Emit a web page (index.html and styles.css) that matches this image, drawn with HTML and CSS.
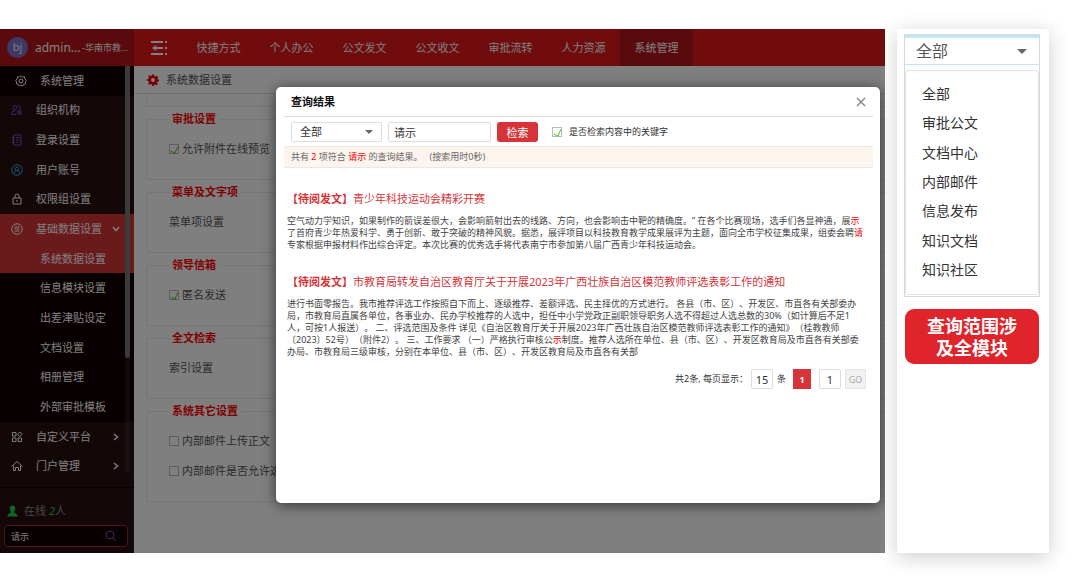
FILE: index.html
```html
<!DOCTYPE html>
<html lang="zh-CN">
<head>
    <meta charset="UTF-8">
    <meta name="viewport" content="width=device-width, initial-scale=1.0">
    <title>系统管理 - 查询结果</title>
    <link rel="stylesheet" href="styles.css">
</head>
<body>
    <div class="app">
        <!-- 左侧菜单 -->
        <aside class="sidebar">
            <div class="user">
                <span class="avatar">bj</span>
                <span class="user-name">admin...</span>
                <span class="user-org">-华南市教...</span>
            </div>
            <nav class="menu">
                <a class="menu-item menu-top" href="#">
                    <svg class="icon" viewBox="0 0 24 24"><path d="M12 1.500l3 2.500 4-.5.5 4 3 3-1.500 3 .5 4-4 1-2 3.500-3.500-1.500L8.500 22l-2-3.500-4-1 .5-4-1.500-3 3-3 .5-4 4 .5z"/><circle cx="12" cy="12" r="4"/></svg>
                    <span>系统管理</span>
                </a>
                <a class="menu-item" href="#">
                    <svg class="icon purple" viewBox="0 0 24 24"><circle cx="8" cy="7" r="4"/><path d="M14 3a4 4 0 0 1 1 8M2 21v-4q0-4 6-4M2 21h8"/><circle cx="17" cy="17" r="4"/><path d="M17 15v4M15 17h4"/></svg>
                    <span>组织机构</span>
                </a>
                <a class="menu-item" href="#">
                    <svg class="icon purple" viewBox="0 0 24 24"><path d="M5 2h15v20H5zM2 7h5M2 12h5M2 17h5M10 7h7M10 12h7M10 17h3M16 17h1"/></svg>
                    <span>登录设置</span>
                </a>
                <a class="menu-item" href="#">
                    <svg class="icon blue" viewBox="0 0 24 24"><circle cx="12" cy="12" r="10.500"/><circle cx="12" cy="9.500" r="3.500"/><path d="M6 19q0-6 6-6t6 6"/></svg>
                    <span>用户账号</span>
                </a>
                <a class="menu-item" href="#">
                    <svg class="icon" viewBox="0 0 24 24"><path d="M4 10h16v12H4zM8 10V6q0-4 4-4t4 4v4M12 14v4"/></svg>
                    <span>权限组设置</span>
                </a>
                <a class="menu-item active" href="#">
                    <svg class="icon" viewBox="0 0 24 24"><circle cx="12" cy="12" r="10.500"/><path d="M7 8h10M7 12h10M7 16h10"/></svg>
                    <span>基础数据设置</span>
                    <svg class="arrow" viewBox="0 0 10 10"><path d="M2 3l3 3.500L8 3"/></svg>
                </a>
                <a class="menu-item sub active" href="#">系统数据设置</a>
                <a class="menu-item sub" href="#">信息模块设置</a>
                <a class="menu-item sub" href="#">出差津贴设定</a>
                <a class="menu-item sub" href="#">文档设置</a>
                <a class="menu-item sub" href="#">相册管理</a>
                <a class="menu-item sub" href="#">外部审批模板</a>
                <a class="menu-item" href="#">
                    <svg class="icon" viewBox="0 0 24 24"><path d="M3 3h7v7H3zM3 14h7v7H3zM14 14h7v7h-7zM17.500 2l4.500 4.500-4.500 4.500L13 6.500z"/></svg>
                    <span>自定义平台</span>
                    <svg class="arrow" viewBox="0 0 10 10"><path d="M3 2l3.500 3L3 8"/></svg>
                </a>
                <a class="menu-item" href="#">
                    <svg class="icon" viewBox="0 0 24 24"><path d="M1 13L12 3l11 10M5 11v10h4v-6h6v6h4V11"/></svg>
                    <span>门户管理</span>
                    <svg class="arrow" viewBox="0 0 10 10"><path d="M3 2l3.500 3L3 8"/></svg>
                </a>
                <div class="scrollbar"><div class="scroll-thumb"></div></div>
            </nav>
            <div class="side-footer">
                <div class="online">
                    <svg class="person" viewBox="0 0 24 26"><path d="M12 1c4 0 6 3 6 7 0 3-1.500 5-3 7 0 3 8 3 8 10H1c0-7 8-7 8-10-1.500-2-3-4-3-7 0-4 2-7 6-7z"/></svg>
                    <span>在线 <b class="online-num">2</b>人</span>
                </div>
                <div class="side-search">
                    <input class="side-input" type="text" value="请示" aria-label="搜索">
                    <svg class="icon purple" viewBox="0 0 24 24"><circle cx="10" cy="10" r="8"/><path d="M16 16l6 6"/></svg>
                </div>
            </div>
        </aside>

        <!-- 主体 -->
        <div class="main">
            <header class="topbar">
                <svg class="toggle" viewBox="0 0 17 14"><path d="M0 1h12M14 1h2M4 7h8M14 7h2M0 13h12M14 13h2"/><path class="toggle-tip" d="M5 4v6L1 7z"/></svg>
                <nav class="tabs">
                    <a class="tab" href="#">快捷方式</a>
                    <a class="tab" href="#">个人办公</a>
                    <a class="tab" href="#">公文发文</a>
                    <a class="tab" href="#">公文收文</a>
                    <a class="tab" href="#">审批流转</a>
                    <a class="tab" href="#">人力资源</a>
                    <a class="tab tab-active" href="#">系统管理</a>
                </nav>
            </header>
            <div class="crumb">
                <svg class="gear" viewBox="0 0 24 24"><path fill-rule="evenodd" d="M10 1h4l.7 3 2.300 1 2.700-1.700 3 3L21 9l.8 2 2.200.5v3l-3 .7-1 2.300 1.700 2.500-2.500 2.500-2.700-1.500-2.200 1L13.500 24h-3L9.700 21l-2.200-1-2.700 1.500L2.300 19 4 16.500l-1-2.300-3-.7v-3L3 10l1-2.300L2.300 5l2.500-2.500L7.500 4l2-1zM12 8a4 4 0 1 0 0 8 4 4 0 0 0 0-8z"/></svg>
                <span>系统数据设置</span>
            </div>
            <div class="settings">
                <div class="group-end"></div>
                <fieldset class="group">
                    <legend>审批设置</legend>
                    <label class="option"><input class="tick" type="checkbox" checked>允许附件在线预览</label>
                </fieldset>
                <fieldset class="group">
                    <legend>菜单及文字项</legend>
                    <div class="option">菜单项设置</div>
                </fieldset>
                <fieldset class="group">
                    <legend>领导信箱</legend>
                    <label class="option"><input class="tick" type="checkbox" checked>匿名发送</label>
                </fieldset>
                <fieldset class="group">
                    <legend>全文检索</legend>
                    <div class="option">索引设置</div>
                </fieldset>
                <fieldset class="group">
                    <legend>系统其它设置</legend>
                    <label class="option"><input class="tick" type="checkbox">内部邮件上传正文</label>
                    <label class="option"><input class="tick" type="checkbox">内部邮件是否允许选择</label>
                </fieldset>
            </div>
        </div>

        <!-- 查询结果弹窗 -->
        <div class="overlay">
            <div class="modal">
                <div class="modal-header">
                    <h2>查询结果</h2>
                    <button class="close" type="button" aria-label="关闭">
                        <svg viewBox="0 0 10 10"><path d="M1 1l8 8M9 1L1 9"/></svg>
                    </button>
                </div>
                <form class="search-row">
                    <div class="select-box">
                        <select class="field" aria-label="查询范围">
                            <option>全部</option>
                            <option>审批公文</option>
                            <option>文档中心</option>
                            <option>内部邮件</option>
                        </select>
                    </div>
                    <input class="field keyword" type="text" value="请示" aria-label="关键字">
                    <button class="search-btn" type="button">检索</button>
                    <label class="check-content"><input class="tick" type="checkbox" checked>是否检索内容中的关键字</label>
                </form>
                <div class="summary">共有 <em>2</em> 项符合 <em>请示</em> 的查询结果。 &nbsp;&nbsp;(搜索用时0秒)</div>
                <div class="results">
                    <article class="result">
                        <h3><b>【待阅发文】</b>青少年科技运动会精彩开赛</h3>
                        <p>
                            空气动力学知识，如果制作的箭误差很大，会影响箭射出去的线路、方向，也会影响击中靶的精确度。” 在各个比赛现场，选手们各显神通，展<em>示</em><br>
                            了首府青少年热爱科学、勇于创新、敢于突破的精神风貌。据悉，展评项目以科技教育教学成果展评为主题，面向全市学校征集成果，组委会聘<em>请</em><br>
                            专家根据申报材料作出综合评定。本次比赛的优秀选手将代表南宁市参加第八届广西青少年科技运动会。
                        </p>
                    </article>
                    <article class="result">
                        <h3><b>【待阅发文】</b>市教育局转发自治区教育厅关于开展2023年广西壮族自治区模范教师评选表彰工作的通知</h3>
                        <p>
                            进行书面零报告。我市推荐评选工作按照自下而上、逐级推荐、差额评选、民主择优的方式进行。 各县（市、区）、开发区、市直各有关部委办<br>
                            局，市教育局直属各单位，各事业办、民办学校推荐的人选中，担任中小学党政正副职领导职务人选不得超过人选总数的30%（如计算后不足1<br>
                            人，可按1人报送）。 二、评选范围及条件 详见《自治区教育厅关于开展2023年广西壮族自治区模范教师评选表彰工作的通知》（桂教教师<br>
                            〔2023〕52号）（附件2）。 三、工作要求 （一）严格执行审核公<em>示</em>制度。推荐人选所在单位、县（市、区）、开发区教育局及市直各有关部委<br>
                            办局、市教育局三级审核，分别在本单位、县（市、区）、开发区教育局及市直各有关部
                        </p>
                    </article>
                    <div class="pager">
                        <label class="pager-label" for="pageSize">共2条, 每页显示：</label>
                        <input class="page-input" id="pageSize" type="text" value="15">
                        <span class="pager-unit">条</span>
                        <button class="page-current" type="button">1</button>
                        <input class="page-input" type="text" value="1" aria-label="页码">
                        <button class="page-go" type="button">GO</button>
                    </div>
                </div>
            </div>
        </div>
    </div>

    <!-- 查询范围说明 -->
    <aside class="scope">
        <div class="scope-box">
            <div class="select-box scope-select">
                <select aria-label="范围">
                    <option>全部</option>
                </select>
            </div>
            <ul class="scope-list">
                <li>全部</li>
                <li>审批公文</li>
                <li>文档中心</li>
                <li>内部邮件</li>
                <li>信息发布</li>
                <li>知识文档</li>
                <li>知识社区</li>
            </ul>
        </div>
        <div class="scope-note">查询范围涉<br>及全模块</div>
    </aside>
</body>
</html>
```

FILE: styles.css
```css
* {
    box-sizing: border-box;
}
body {
    margin: 0;
    padding: 29px 31px 35px 0;
    min-height: 100vh;
    display: flex;
    gap: 12px;
    background-color: #fff;
    font-family: "Noto Sans", "Noto Sans CJK SC", sans-serif;
    font-size: 11px;
    line-height: 14px;
    text-spacing-trim: space-all;
    color: #333;
}
input, select, button {
    font-family: inherit;
    font-size: inherit;
    color: inherit;
    margin: 0;
    padding: 0;
}
a {
    color: inherit;
    text-decoration: none;
}
em {
    font-style: normal;
    color: #f00;
}
svg {
    display: block;
    flex: none;
    fill: none;
    stroke: currentColor;
}
.app {
    position: relative;
    flex: 1;
    min-width: 0;
    display: flex;
    overflow: hidden;
}

/* 左侧菜单 */
.sidebar {
    width: 134px;
    flex: none;
    display: flex;
    flex-direction: column;
    background-color: #260e0e;
    color: #fff;
}
.user {
    height: 37px;
    display: flex;
    align-items: center;
    padding-left: 7px;
    background-color: #b41418;
    white-space: nowrap;
}
.avatar {
    width: 21px;
    height: 21px;
    line-height: 20px;
    border-radius: 50%;
    background-color: #7a70c8;
    text-align: center;
}
.user-name {
    margin-left: 7px;
    width: 47px;
    font-size: 12px;
}
.user-org {
    font-size: 9px;
}
.menu {
    position: relative;
    flex: 1;
    display: grid;
    grid-auto-rows: 1fr;
    padding-bottom: 6px;
    white-space: nowrap;
}
.menu-item {
    display: flex;
    align-items: center;
    padding-left: 11px;
}
.menu-item .icon {
    margin-right: 13px;
}
.menu-top {
    padding-left: 15px;
    background-color: #100000;
}
.sub {
    padding-left: 40px;
    background-color: #100000;
}
.menu-item.active {
    background-color: #d63439;
}
.icon {
    width: 12px;
    height: 12px;
    stroke-width: 2;
}
.purple {
    color: #6a58c8;
}
.blue {
    color: #38a8d8;
}
.arrow {
    width: 10px;
    height: 10px;
    margin-left: auto;
    margin-right: 13px;
    stroke-width: 1.5;
}
.scrollbar {
    position: absolute;
    top: 0;
    right: 4px;
    bottom: 16px;
    width: 5px;
    background-color: rgba(255, 255, 255, 0.08);
}
.scroll-thumb {
    height: 72%;
    border-radius: 0 0 3px 3px;
    background-color: #777;
}
.side-footer {
    border-top: 1px solid #0c0000;
    padding: 16px 6px 6px 4px;
}
.online {
    display: flex;
    align-items: center;
    gap: 6px;
    padding-left: 3px;
    color: #8a8f98;
}
.person {
    width: 11px;
    height: 12px;
    fill: #20d040;
    stroke: none;
}
.online-num {
    color: #20d040;
    font-weight: normal;
    font-style: italic;
}
.side-search {
    display: flex;
    align-items: center;
    height: 22px;
    margin-top: 7px;
    padding: 0 10px 0 6px;
    border: 1px solid #a02428;
    border-radius: 4px;
    background-color: #100000;
}
.side-input {
    flex: 1;
    min-width: 0;
    border: none;
    background: none;
    outline: none;
    font-size: 9px;
}

/* 主体 */
.main {
    flex: 1;
    min-width: 0;
    background-color: #fff;
    color: #555;
}
.topbar {
    height: 37px;
    display: flex;
    align-items: center;
    padding-left: 17px;
    background-color: #e0161c;
    color: #fff;
}
.toggle {
    width: 17px;
    height: 14px;
    stroke-width: 2;
}
.toggle-tip {
    fill: #fff;
    stroke: none;
}
.tabs {
    display: flex;
    align-self: stretch;
    margin-left: 14px;
}
.tab {
    display: flex;
    align-items: center;
    justify-content: center;
    width: 73px;
}
.tab-active {
    background-color: #b41418;
}
.crumb {
    display: flex;
    align-items: center;
    gap: 7px;
    height: 28px;
    padding-left: 13px;
    border-bottom: 1px solid #dcdcdc;
}
.gear {
    width: 12px;
    height: 12px;
    fill: #f00000;
    stroke: none;
}
.settings {
    padding-left: 12px;
}
.group-end {
    height: 13px;
    margin-bottom: 5px;
    border: 1px solid #ebebeb;
    border-width: 0 0 1px 1px;
}
.group {
    min-width: 0;
    margin: 0 0 5px;
    padding: 8px 0 15px 22px;
    border: 1px solid #ebebeb;
    border-right: none;
    border-radius: 3px 0 0 3px;
}
.group legend {
    padding: 0 3px;
    font-weight: bold;
    color: #f00;
}
.option {
    display: flex;
    align-items: center;
    height: 30px;
    white-space: nowrap;
}
.tick {
    appearance: none;
    position: relative;
    width: 10px;
    height: 10px;
    margin-right: 3px;
    border: 1px solid #bbb;
    flex: none;
}
.tick:checked::after {
    content: "";
    position: absolute;
    left: 2px;
    top: 0;
    width: 4px;
    height: 7px;
    border: solid #5cc832;
    border-width: 0 1px 1px 0;
    transform: rotate(25deg);
}

/* 弹窗 */
.overlay {
    position: absolute;
    inset: 0;
    display: flex;
    padding: 58px 5px 50px 276px;
    background-color: rgba(0, 0, 0, 0.5);
}
.modal {
    flex: 1;
    min-width: 0;
    padding: 0 7px 0 8px;
    border-radius: 5px;
    background-color: #fff;
    box-shadow: 0 2px 14px rgba(0, 0, 0, 0.6);
}
.modal-header {
    display: flex;
    align-items: center;
    justify-content: space-between;
    height: 30px;
    padding: 0 7px;
    border-bottom: 1px solid #ddd;
}
.modal-header h2 {
    margin: 0;
    font-size: 11px;
    color: #111;
}
.close {
    border: none;
    background: none;
    color: #888;
    cursor: pointer;
}
.close svg {
    width: 10px;
    height: 10px;
    stroke-width: 1.5;
}
.search-row {
    display: flex;
    align-items: center;
    gap: 6px;
    height: 29px;
    padding-left: 7px;
}
.select-box {
    position: relative;
    width: 91px;
}
.select-box select {
    appearance: none;
    display: block;
    width: 100%;
    outline: none;
}
.select-box::after {
    content: "";
    position: absolute;
    right: 9px;
    top: 8px;
    border: solid transparent;
    border-width: 4px 4px 0;
    border-top-color: #666;
}
.field {
    height: 20px;
    padding: 0 8px;
    border: 1px solid #ddd;
    border-radius: 2px;
    background-color: #fff;
}
.keyword {
    width: 103px;
    padding: 0 5px;
}
.search-btn {
    width: 41px;
    height: 20px;
    border: none;
    border-radius: 3px;
    background-color: #d63439;
    color: #fff;
    cursor: pointer;
}
.check-content {
    display: flex;
    align-items: center;
    margin-left: 8px;
    font-size: 9px;
}
.check-content .tick {
    margin-right: 7px;
}
.summary {
    height: 22px;
    padding-left: 7px;
    border: solid #e8e8e8;
    border-width: 1px 0;
    background-color: #fef4ee;
    font-size: 9px;
    line-height: 20px;
    color: #666;
}
.results {
    padding: 23px 7px 0 3px;
}
.result {
    margin-bottom: 23px;
}
.result h3 {
    margin: 0 0 8px;
    font-size: 11px;
    font-weight: normal;
    line-height: 16px;
    color: #d63439;
    white-space: nowrap;
}
.result p {
    margin: 0;
    font-size: 9px;
    line-height: 12px;
    color: #444;
    white-space: nowrap;
}
.pager {
    display: flex;
    align-items: center;
    justify-content: flex-end;
    margin-top: -12px;
    font-size: 9px;
}
.pager-label {
    margin-right: 3px;
}
.page-input {
    width: 22px;
    height: 20px;
    border: 1px solid #ddd;
    border-radius: 2px;
    text-align: center;
    font-size: 11px;
}
.pager-unit {
    margin: 0 7px 0 4px;
}
.page-current {
    width: 18px;
    height: 20px;
    margin-right: 8px;
    border: none;
    background-color: #d63439;
    color: #fff;
    font-weight: bold;
}
.page-go {
    width: 21px;
    height: 20px;
    margin-left: 4px;
    border: 1px solid #e6e6e6;
    background-color: #f2f2f2;
    color: #aaa;
}

/* 右侧范围面板 */
.scope {
    width: 152px;
    flex: none;
    padding: 5px 9px 0 7px;
    background-color: #fff;
    box-shadow: 0 4px 20px rgba(0, 0, 0, 0.2);
}
.scope-box {
    border: 1px solid #d8d8d8;
}
.scope-select {
    width: auto;
    border-top: 3px solid #c4e6fc;
    border-bottom: 1px solid #c4e6fc;
}
.scope-select select {
    height: 26px;
    padding: 0 11px;
    border: none;
    background-color: #fff;
    font-size: 16px;
    color: #555;
}
.scope-select::after {
    right: 12px;
    top: 11px;
    border-width: 5px 5px 0;
}
.scope-list {
    display: grid;
    grid-auto-rows: 1fr;
    align-items: center;
    min-height: 225px;
    margin: 5px 0 1px;
    padding: 8px 0 9px 16px;
    border: 1px solid #e2e2e2;
    border-radius: 3px;
    list-style: none;
    font-size: 14px;
}
.scope-note {
    margin: 12px 1px 0;
    padding: 6px 0 5px;
    border-radius: 9px;
    background-color: #e0242c;
    color: #fff;
    font-size: 18px;
    font-weight: bold;
    line-height: 22px;
    text-align: center;
}
```
